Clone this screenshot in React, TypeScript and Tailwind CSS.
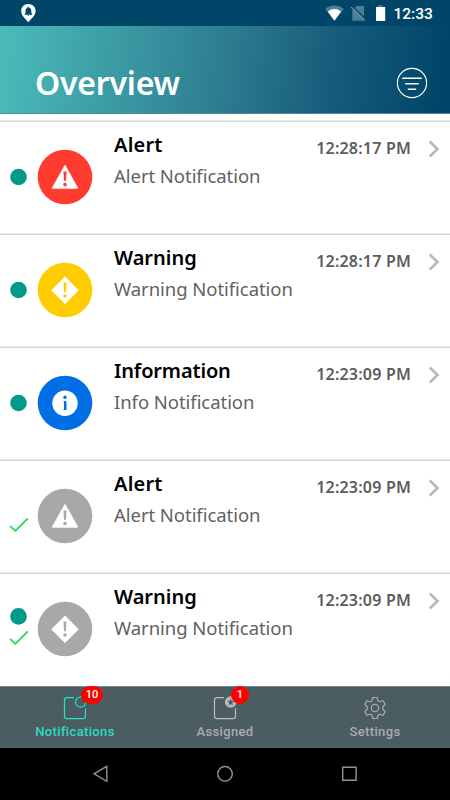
import React from "react";

type Kind = "alert" | "warning" | "info";

interface Item {
  kind: Kind;
  color: string;
  title: string;
  text: string;
  time: string;
  unread: boolean;
  done: boolean;
  titleSpacing: string;
}

const items: Item[] = [
  { kind: "alert", color: "#ff3b30", title: "Alert", text: "Alert Notification", time: "12:28:17 PM", unread: true, done: false, titleSpacing: "tracking-[0.2px]" },
  { kind: "warning", color: "#ffcc00", title: "Warning", text: "Warning Notification", time: "12:28:17 PM", unread: true, done: false, titleSpacing: "tracking-[0px]" },
  { kind: "info", color: "#006fe6", title: "Information", text: "Info Notification", time: "12:23:09 PM", unread: true, done: false, titleSpacing: "tracking-[-0.15px]" },
  { kind: "alert", color: "#a8a8a8", title: "Alert", text: "Alert Notification", time: "12:23:09 PM", unread: false, done: true, titleSpacing: "tracking-[0.2px]" },
  { kind: "warning", color: "#a8a8a8", title: "Warning", text: "Warning Notification", time: "12:23:09 PM", unread: true, done: true, titleSpacing: "tracking-[0px]" },
];

function KindIcon({ kind, color }: { kind: Kind; color: string }) {
  return (
    <svg width="56" height="56" viewBox="0 0 56 56" className="block">
      <circle cx="28" cy="28" r="27.3" fill={color} />
      {kind === "alert" && (
        <>
          <path d="M28 16 L40.6 38.4 Q41 39.6 39.8 39.6 H16.2 Q15 39.6 15.4 38.4 Z" fill="#fff" stroke="#fff" strokeWidth="0.5" strokeLinejoin="round" />
          <path d="M26.5 22.6h3l-.5 9.2h-2z" fill={color} />
          <circle cx="28" cy="35.6" r="1.8" fill={color} />
        </>
      )}
      {kind === "warning" && (
        <>
          <path d="M28 14.8 L41.4 28.3 L28 41.8 L14.6 28.3 Z" fill="#fff" stroke="#fff" strokeWidth="0.6" strokeLinejoin="round" />
          <path d="M26.5 20.5h3l-.5 9.8h-2z" fill={color} />
          <circle cx="28" cy="34" r="1.8" fill={color} />
        </>
      )}
      {kind === "info" && (
        <>
          <circle cx="28" cy="28.3" r="12.7" fill="#fff" />
          <circle cx="28" cy="22.2" r="1.7" fill={color} />
          <path d="M26.2 25.9h3.1l.3 9.2h-3.4l.8-1v-7.1z" fill={color} />
        </>
      )}
    </svg>
  );
}

function Row({ item }: { item: Item }) {
  return (
    <li className="flex h-[113px] shrink-0 border-t border-[#e6edf3]">
      <div className="flex w-full border-t border-[#d4d6d8]">
        <div className="w-[37px] shrink-0">
          <svg width="37" height="110" viewBox="0 0 37 110">
            {item.unread && <circle cx="18.5" cy={item.done ? 42.4 : 55} r="8.3" fill="#009a88" />}
            {item.done && <path d="M10 64.9 L15.4 69.9 L27.8 57.4" fill="none" stroke="#20d84a" strokeWidth="1.7" />}
          </svg>
        </div>
        <div className="w-[77px] shrink-0 pt-[27px]">
          <KindIcon kind={item.kind} color={item.color} />
        </div>
        <div className="min-w-0 flex-1 pt-[7px] whitespace-nowrap">
          <div className={"h-[31px] text-[20px] leading-8 font-semibold text-black " + item.titleSpacing}>{item.title}</div>
          <div className="h-8 text-[18.5px] leading-8 font-normal tracking-[-0.05px] text-[#626262]">{item.text}</div>
        </div>
        <time className="mt-[14px] mr-4 h-6 shrink-0 text-[16px] leading-6 font-semibold tracking-[0.2px] whitespace-nowrap text-[#5c5c5c]">{item.time}</time>
        <svg width="13" height="20" viewBox="0 0 13 20" className="mt-[17px] mr-[10px] shrink-0">
          <path d="M2.7 2.5 L10.5 10 L2.7 17.5" fill="none" stroke="#b8b8b8" strokeWidth="2.6" />
        </svg>
      </div>
    </li>
  );
}

function TabFrame({ color, starred }: { color: string; starred: boolean }) {
  return (
    <svg width="28" height="28" viewBox="0 0 28 28" fill="none" stroke={color} strokeWidth="1.25">
      <path d="M13 3.5H5.8Q3.5 3.5 3.5 5.8V22.2Q3.5 24.5 5.8 24.5H22.2Q24.5 24.5 24.5 22.2V14.3" />
      <circle cx="19.7" cy="8" r="5.2" fill={starred ? color : "none"} />
      {starred && (
        <path d="M19.7 4.7l1 2.2 2.4.3-1.8 1.6.5 2.4-2.1-1.2-2.1 1.2.5-2.4-1.8-1.6 2.4-.3z" fill="#4b5c63" stroke="none" />
      )}
    </svg>
  );
}

function GearIcon() {
  return (
    <svg width="28" height="28" viewBox="0 0 28 28" fill="none" stroke="#a9adaf" strokeWidth="1.2" strokeLinejoin="round">
      <path d="M11.8 3.5h4.4l.7 3.2 1.9 1.1 3.3-1 2.1 3.6-2.4 2.3v2.6l2.4 2.3-2.1 3.6-3.3-1-1.9 1.1-.7 3.2h-4.4l-.7-3.2-1.9-1.1-3.3 1-2.1-3.6 2.4-2.3v-2.6l-2.4-2.3 2.1-3.6 3.3 1 1.9-1.1z" />
      <circle cx="14" cy="14" r="3.7" />
    </svg>
  );
}

export default function App() {
  return (
    <div className="flex h-[800px] w-[450px] flex-col overflow-hidden bg-white font-['Noto_Sans',sans-serif]">
      <header className="flex h-[26px] shrink-0 items-center bg-[#004669]">
        <svg width="450" height="26" viewBox="0 0 450 26" className="w-[390px] shrink-0" preserveAspectRatio="xMinYMin slice">
          <path d="M28.3 4C24.1 4 21.2 7.1 21.2 11C21.2 15.8 25.4 18.5 28.3 22.3C31.3 18.5 35.6 15.8 35.6 11C35.6 7.1 32.6 4 28.3 4Z" fill="#fff" />
          <path d="M27.8 6.8h1l.4 1c1.5.5 2.1 1.7 2.1 3.3v2l.9 1v.7h-7.6v-.7l.9-1v-2c0-1.6.6-2.8 2-3.3zM27.2 15.2h2.3q-1.1 1.5-2.3 0z" fill="#004669" />
          <path d="M325.2 9C330 4.4 339 4.4 343.8 9L334.4 20.7Z" fill="#4e7f98" />
          <path d="M327.8 11.5Q334.4 6.6 341.1 11.5L334.4 20.7Z" fill="#fff" />
          <path d="M356.6 6H364V20.7H352.3V10.2Z" fill="#4e7f98" />
          <path d="M352 5.8L366.4 19.8" stroke="#004669" strokeWidth="1.4" />
          <path d="M351 7L364.8 20.6" stroke="#6491a6" strokeWidth="1.2" />
          <path d="M378 5.2h4.5v2H378z" fill="#4e7f98" />
          <path d="M376 7h9.2v14H376z" fill="#fff" />
        </svg>
        <span className="mt-[3px] ml-[3.5px] font-['Roboto',sans-serif] text-[15.5px] font-medium text-white">12:33</span>
      </header>

      <div className="flex h-[88px] shrink-0 border-b border-[#5189a0] bg-[linear-gradient(97deg,#4bbcba_0%,#2d7c90_50%,#175c7b_73%,#004669_97%)]">
        <h1 className="mt-[33px] ml-[35px] h-12 flex-1 text-[32px] leading-[48px] font-semibold tracking-[-0.2px] text-white">Overview</h1>
        <button aria-label="Filter" className="mt-[41px] mr-[22px] h-8 w-8">
          <svg width="32" height="32" viewBox="0 0 32 32" fill="none" stroke="#fff">
            <circle cx="16" cy="16" r="14.6" strokeWidth="1.2" />
            <path d="M6.2 11.2H25.8M9.2 16.8H22.8M11.8 22.2H20.2" strokeWidth="1.6" />
          </svg>
        </button>
      </div>

      <ul className="flex h-[572px] shrink-0 flex-col overflow-hidden pt-[6px]">
        {items.map((item, i) => (
          <Row key={i} item={item} />
        ))}
      </ul>

      <nav className="grid h-[62px] shrink-0 grid-cols-3 border-t border-[#7b878c] bg-[#4b5c63] font-['Roboto',sans-serif] text-[13px] font-medium tracking-[0.35px] text-[#a9adaf]">
        <div className="relative flex flex-col items-center pt-[7px] text-[#2ddcc0]">
          <TabFrame color="#1fe5ca" starred={false} />
          <span className="leading-5">Notifications</span>
          <span className="absolute top-[-1px] left-[81px] flex h-[18px] w-[22px] items-center justify-center rounded-full bg-[#ff0000] text-[11px] tracking-normal text-white">10</span>
        </div>
        <div className="relative flex flex-col items-center pt-[7px]">
          <TabFrame color="#b6babb" starred />
          <span className="leading-5">Assigned</span>
          <span className="absolute top-[-1px] left-[81px] flex h-[18px] w-[18px] items-center justify-center rounded-full bg-[#ff0000] text-[11px] tracking-normal text-white">1</span>
        </div>
        <div className="flex flex-col items-center pt-[7px]">
          <GearIcon />
          <span className="leading-5">Settings</span>
        </div>
      </nav>

      <footer className="h-[52px] shrink-0 bg-black">
        <svg width="450" height="52" viewBox="0 0 450 52" fill="none" stroke="#929292" strokeWidth="1.4">
          <path d="M94 25.8L106.8 18.3V33.3Z" />
          <circle cx="225" cy="25.8" r="7.3" />
          <path d="M342.7 19.2H356.1V32.2H342.7Z" />
        </svg>
      </footer>
    </div>
  );
}
